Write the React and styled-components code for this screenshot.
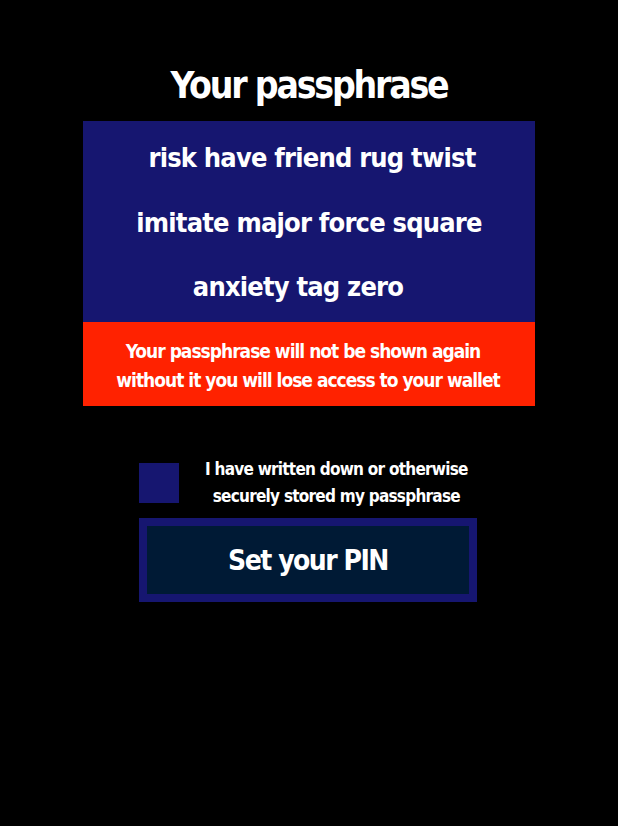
import styled, { createGlobalStyle } from 'styled-components';

const GlobalStyle = createGlobalStyle`
  html, body {
    margin: 0;
    padding: 0;
    background: #000;
  }
  body {
    font-family: "DejaVu Sans Condensed", "DejaVu Sans", sans-serif;
    color: #fff;
  }
`;

// shift: positive moves the line left, negative moves it right
const words = [
  { text: 'risk have friend rug twist', shift: -6 },
  { text: 'imitate major force square', shift: 0 },
  { text: 'anxiety tag zero', shift: 22 },
];

export default function App() {
  return (
    <>
      <GlobalStyle />
      <Page>
        <Title>Your passphrase</Title>
        <PhraseBox>
          {words.map((line, i) => (
            <PhraseLine key={i} $shift={line.shift}>
              {line.text}
            </PhraseLine>
          ))}
        </PhraseBox>
        <Warning>
          <WarningLine $shift={12}>Your passphrase will not be shown again</WarningLine>
          <WarningLine $shift={2}>without it you will lose access to your wallet</WarningLine>
        </Warning>
        <Confirm>
          <CheckRow>
            <CheckBox type="button" aria-label="confirm" />
            <CheckLabel>
              I have written down or otherwise
              <br />
              securely stored my passphrase
            </CheckLabel>
          </CheckRow>
          <PinButton>Set your PIN</PinButton>
        </Confirm>
      </Page>
    </>
  );
}

const Page = styled.main`
  width: 452px;
  min-height: 826px;
  margin: 0 auto;
  padding-top: 62px;
  box-sizing: border-box;

  display: flex;
  flex-direction: column;
  align-items: stretch;
`;

const Title = styled.h1`
  margin: 0 0 12px;
  height: 47px;
  line-height: 47px;
  text-align: center;
  font-size: 37px;
  font-weight: 700;
  letter-spacing: -2.2px;
`;

const PhraseBox = styled.section`
  height: 201px;
  background-color: #161670;
  box-sizing: border-box;
  padding-top: 19px;

  display: flex;
  flex-direction: column;
  align-items: center;
  gap: 28.5px;
`;

const PhraseLine = styled.p`
  margin: 0;
  padding-right: ${({ $shift }) => Math.max($shift, 0)}px;
  padding-left: ${({ $shift }) => Math.max(-$shift, 0)}px;
  line-height: 36px;
  font-size: 27px;
  font-weight: 700;
  letter-spacing: -0.8px;
`;

const Warning = styled.section`
  height: 84px;
  background-color: #ff2200;
  box-sizing: border-box;
  padding-top: 15px;
  text-align: center;
`;

const WarningLine = styled.p`
  margin: 0;
  padding-right: ${({ $shift }) => $shift}px;
  line-height: 29px;
  font-size: 19px;
  font-weight: 700;
  letter-spacing: -1px;
`;

const Confirm = styled.div`
  width: 338px;
  align-self: flex-start;
  margin: 50px 0 0 56px;

  display: flex;
  flex-direction: column;
  gap: 8px;
`;

const CheckRow = styled.div`
  display: flex;
  align-items: center;
  gap: 26px;
`;

const CheckBox = styled.button`
  width: 40px;
  height: 40px;
  flex: none;
  border: none;
  padding: 0;
  background-color: #161670;
`;

const CheckLabel = styled.span`
  white-space: nowrap;
  font-size: 17px;
  font-weight: 700;
  line-height: 27px;
  text-align: center;
  letter-spacing: -0.75px;
`;

const PinButton = styled.button`
  height: 84px;
  border: 8px solid #161670;
  background-color: #001a35;
  color: #fff;
  font-family: inherit;
  font-size: 28px;
  font-weight: 700;
  letter-spacing: -1.5px;
`;
